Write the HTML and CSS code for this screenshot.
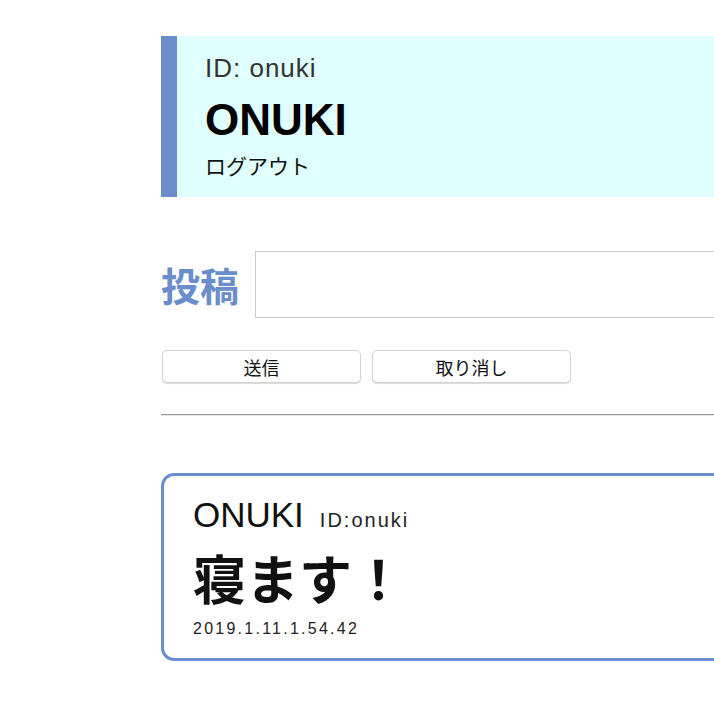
FILE: index.html
```html
<!DOCTYPE html>
<html lang="ja">
<head>
<meta charset="utf-8">
<title>ONUKI</title>
<link rel="stylesheet" href="styles.css">
</head>
<body>
<div class="page">
  <header class="profile">
    <div class="profile-id">ID: onuki</div>
    <div class="profile-name">ONUKI</div>
    <div class="profile-logout">ログアウト</div>
  </header>

  <form class="post-form">
    <div class="post-row">
      <label class="post-label">投稿</label>
      <textarea class="post-input"></textarea>
    </div>
    <div class="post-buttons">
      <button type="button" class="btn">送信</button>
      <button type="button" class="btn">取り消し</button>
    </div>
  </form>

  <hr class="divider">

  <article class="card">
    <div class="card-head">
      <span class="card-name">ONUKI</span>
      <span class="card-id">ID:onuki</span>
    </div>
    <div class="card-body">寝ます！</div>
    <div class="card-date">2019.1.11.1.54.42</div>
  </article>
</div>
</body>
</html>
```

FILE: styles.css
```css
html, body {
  margin: 0;
  padding: 0;
  overflow: hidden;
  background: #fff;
}
body {
  font-family: "Liberation Sans", "Noto Sans CJK JP", sans-serif;
  color: #111;
}
.page {
  margin-left: 161px;
  width: 640px;
  padding-top: 36px;
}
.profile {
  background: #e0ffff;
  border-left: 16px solid #6a8ecb;
  height: 161px;
  box-sizing: border-box;
  padding: 16px 0 0 28px;
}
.profile-id {
  font-size: 26px;
  letter-spacing: 1px;
  line-height: 32px;
  color: #333;
}
.profile-name {
  font-size: 44px;
  font-weight: bold;
  line-height: 56px;
  margin-top: 8px;
  color: #000;
}
.profile-logout {
  font-family: "Noto Sans CJK JP", sans-serif;
  font-size: 21px;
  line-height: 34px;
  color: #111;
}
.post-form {
  margin-top: 54px;
}
.post-row {
  display: flex;
  align-items: center;
  gap: 15px;
}
.post-label {
  font-family: "Noto Sans CJK JP", sans-serif;
  font-size: 39px;
  font-weight: bold;
  color: #6a8ecb;
  line-height: 67px;
  width: 79px;
  white-space: nowrap;
}
.post-input {
  flex: 1;
  height: 67px;
  box-sizing: border-box;
  border: 1px solid #c8c8c8;
  resize: none;
  margin: 0;
  padding: 0;
}
.post-buttons {
  display: flex;
  gap: 11px;
  margin-top: 32px;
  padding-left: 1px;
}
.btn {
  width: 199px;
  height: 33px;
  box-sizing: border-box;
  background: #fff;
  border: 1px solid #d4d4d4;
  border-radius: 5px;
  box-shadow: 0 1px 1px rgba(0,0,0,0.15);
  font-family: "Noto Sans CJK JP", sans-serif;
  font-size: 18px;
  color: #111;
  padding: 0;
  margin: 0;
}
.divider {
  margin: 31px 0 0 0;
  border: 0;
  border-top: 1px solid #9a9a9a;
  border-bottom: 1px solid #e6e6e6;
  height: 0;
}
.card {
  margin-top: 57px;
  height: 188px;
  box-sizing: border-box;
  border: 3px solid #6a8ecb;
  border-radius: 13px;
  padding: 19px 0 0 29px;
}
.card-head {
  display: flex;
  align-items: baseline;
  gap: 16px;
  line-height: 40px;
}
.card-name {
  font-size: 35px;
  color: #111;
}
.card-id {
  font-size: 20px;
  letter-spacing: 2px;
  color: #222;
}
.card-body {
  font-family: "Noto Sans CJK JP", sans-serif;
  font-size: 53px;
  font-weight: bold;
  line-height: 74px;
  color: #111;
}
.card-date {
  font-size: 16px;
  letter-spacing: 2.25px;
  line-height: 24px;
  margin-top: 3px;
  color: #222;
}
```
